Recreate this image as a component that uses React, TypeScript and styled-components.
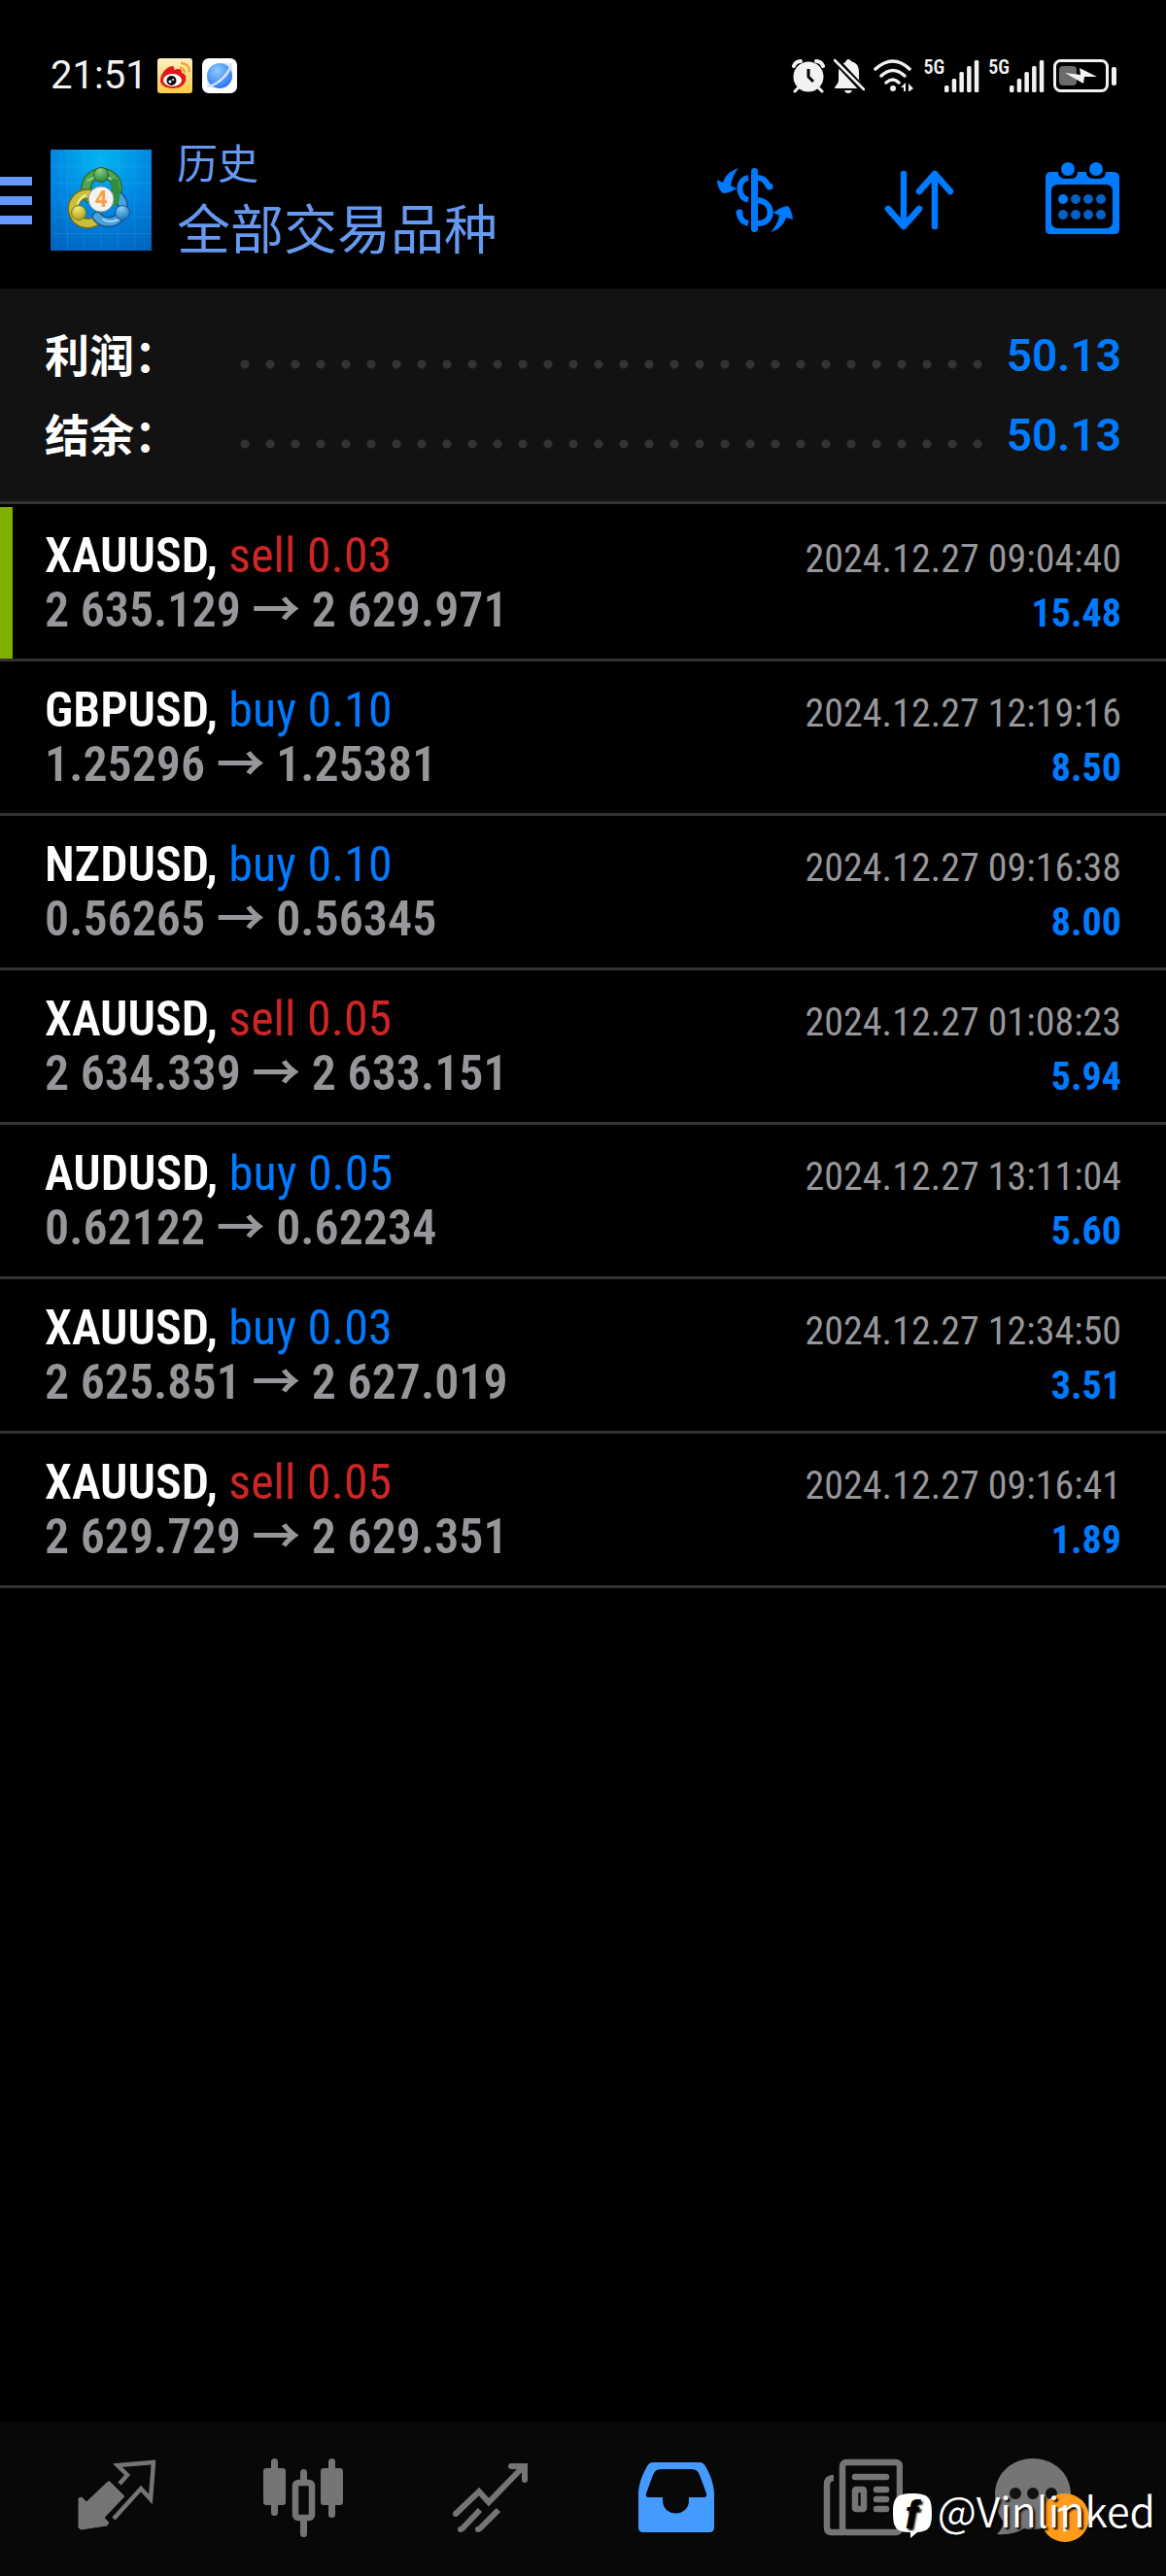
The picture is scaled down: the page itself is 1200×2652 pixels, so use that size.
import React from 'react';
import styled, { createGlobalStyle } from 'styled-components';

const BLUE = '#007aff';
const GREY = '#757575';
const CONDENSED = '"Roboto Condensed", "Noto Sans CJK SC", sans-serif';

const GlobalStyle = createGlobalStyle`
  * { box-sizing: border-box; }
  body { margin: 0; background: #000; }
  button { border: 0; padding: 0; background: none; cursor: pointer; }
  svg { display: block; }
`;

const Page = styled.div`
  position: relative;
  display: flex;
  flex-direction: column;
  min-height: 100vh;
  background: #000;
  color: #fff;
  font-family: Roboto, 'Noto Sans CJK SC', sans-serif;
`;

const StatusBar = styled.div`
  display: flex;
  align-items: center;
  justify-content: space-between;
  height: 115px;
  padding: 41px 50px 0 52px;
`;

const StatusGroup = styled.div<{ $gap: number }>`
  display: flex;
  align-items: center;
  gap: ${(p) => p.$gap}px;
`;

const Clock = styled.time`
  color: #f2f2f2;
  font-size: 40px;
  line-height: 44px;
`;

const Signal = styled.div`
  display: flex;
  align-items: flex-start;
`;

const Network = styled.span`
  color: #f2f2f2;
  font-family: ${CONDENSED};
  font-size: 20px;
  font-weight: 600;
  line-height: 16px;
`;

const Header = styled.header`
  display: flex;
  align-items: center;
  min-height: 182px;
  padding-right: 46px;
`;

const MenuButton = styled.button`
  display: flex;
  flex-direction: column;
  gap: 11px;
  width: 33px;
  margin-right: 19px;
`;

const MenuBar = styled.span`
  height: 9px;
  background: #6699ff;
`;

const Titles = styled.div`
  flex: 1;
  margin-left: 26px;
  padding-bottom: 4px;
  color: #6699f0;
  font-family: 'Noto Sans CJK SC', sans-serif;
`;

const Section = styled.h1`
  margin: 0;
  font-size: 42px;
  font-weight: 400;
  line-height: 56px;
`;

const Filter = styled.p`
  margin: 0;
  font-size: 55px;
  line-height: 76px;
`;

const Actions = styled.div`
  display: flex;
  gap: 88px;
`;

const Summary = styled.dl`
  margin: 0;
  padding: 28px 46px 27px;
  border-bottom: 3px solid #333;
  background: #121212;
`;

const SummaryLine = styled.div`
  display: flex;
  gap: 18px;
  font-size: 46px;
  line-height: 82px;
`;

const SummaryLabel = styled.dt`
  width: 175px;
  font-family: 'Noto Sans CJK SC', sans-serif;
  font-weight: 700;
  line-height: 76px;
`;

const Leader = styled.span`
  flex: 1;
  background: radial-gradient(circle, #333 4px, transparent 5px) 0 41px / 26px 18px repeat-x;
`;

const SummaryValue = styled.dd`
  margin: 0;
  color: ${BLUE};
  font-weight: 600;
`;

const Deals = styled.ul`
  margin: 0;
  padding: 3px 0 0;
  list-style: none;
`;

const Deal = styled.li<{ $marked: boolean }>`
  padding: 22px 46px;
  border-bottom: 3px solid #333;
  background: linear-gradient(${(p) => (p.$marked ? '#7fb000, #7fb000' : '#000, #000')}) left / 13px 100% no-repeat;
  font-family: ${CONDENSED};
`;

const DealLine = styled.div`
  display: flex;
  align-items: baseline;
  justify-content: space-between;
  height: 56px;
  font-size: 50px;
  line-height: 56px;
`;

const Symbol = styled.strong`
  font-weight: 600;
`;

const Side = styled.span<{ $side: 'buy' | 'sell' }>`
  color: ${(p) => (p.$side === 'buy' ? BLUE : '#d02525')};
`;

const Prices = styled.span`
  color: #97979b;
  font-weight: 600;
`;

const Arrow = styled.span`
  font-family: 'Noto Sans CJK SC', sans-serif;
  font-weight: 700;
  line-height: 0;
`;

const Stamp = styled.time`
  color: #97979b;
  font-size: 40px;
`;

const Profit = styled.span`
  color: ${BLUE};
  font-size: 40px;
  font-weight: 700;
`;

const TabBar = styled.nav`
  display: grid;
  grid-template-columns: repeat(6, 1fr);
  align-items: center;
  height: 159px;
  margin-top: auto;
  padding: 0 24px 4px;
  background: #080808;
`;

const Tab = styled.button`
  display: flex;
  justify-content: center;
`;

const Watermark = styled.div`
  position: absolute;
  right: 11px;
  bottom: 36px;
  display: flex;
  align-items: flex-end;
  gap: 5px;
  color: #fff;
  font-family: 'Noto Sans CJK SC', sans-serif;
  font-size: 43px;
  font-weight: 350;
  line-height: 66px;
  text-shadow: 2px 2px 2px #000;
`;

const WeiboIcon = () => (
  <svg width="36" height="36" viewBox="0 0 36 36" aria-hidden="true">
    <defs>
      <linearGradient id="weibo" x1="0" y1="0" x2="0" y2="1">
        <stop offset="0" stopColor="#fff0c4" />
        <stop offset="1" stopColor="#ffcb45" />
      </linearGradient>
    </defs>
    <rect width="36" height="36" rx="3" fill="url(#weibo)" />
    <path d="M3 23C3 16 9 9 15 8c2 0 3 2 2 4 5-2 9-1 8 3 4 1 5 4 4 8-1 5-7 8-13 8S3 28 3 23Z" fill="#e01a1a" />
    <ellipse cx="15.500" cy="22.500" rx="9.500" ry="6.500" fill="#fff" />
    <circle cx="14.500" cy="23" r="5" fill="#111" />
    <circle cx="13" cy="24" r="1.500" fill="#fff" />
    <circle cx="16" cy="22" r="1" fill="#fff" />
    <path d="M23 10c3 0 5 2 5 5M24 5c6 0 9 4 9 9" fill="none" stroke="#f6a22a" strokeWidth="2.500" />
  </svg>
);

const BrowserIcon = () => (
  <svg width="36" height="36" viewBox="0 0 36 36" aria-hidden="true">
    <defs>
      <radialGradient id="planet" cx="0.400" cy="0.300" r="0.800">
        <stop offset="0" stopColor="#8ccbff" />
        <stop offset="1" stopColor="#236bed" />
      </radialGradient>
    </defs>
    <rect width="36" height="36" rx="7" fill="#fff" />
    <path d="M5 30V21L22 5h9v9L15 30Z" fill="#d8e8ff" />
    <circle cx="18" cy="18" r="13" fill="url(#planet)" />
    <path d="M6 29c8-1 20-10 24-22" fill="none" stroke="#cfe4ff" strokeWidth="2.500" />
  </svg>
);

const AlarmIcon = () => (
  <svg width="34" height="36" viewBox="0 0 34 36" aria-hidden="true">
    <g fill="none" stroke="#f2f2f2" strokeLinecap="round">
      <path d="M2 8Q4 3 9 3M32 8Q30 3 25 3" strokeWidth="4" />
      <path d="M8 29l-5 5M26 29l5 5" strokeWidth="3" />
    </g>
    <circle cx="17" cy="19" r="15.500" fill="#f2f2f2" />
    <path d="M17 11v8l5 5" fill="none" stroke="#000" strokeWidth="3" />
  </svg>
);

const MutedIcon = () => (
  <svg width="32" height="36" viewBox="0 0 32 36" aria-hidden="true">
    <path d="M12 4Q13 1 15 1t3 2Q26 5 26 14v8l5 8v1H1c0-3 4-4 4-9v-8Q5 7 12 4Z" fill="#f2f2f2" />
    <path d="M11 33h8q-1 3-4 3t-4-3Z" fill="#f2f2f2" />
    <path d="M0 0L32 34" stroke="#000" strokeWidth="7" />
    <path d="M1 2L31 32" stroke="#f2f2f2" strokeWidth="2.500" strokeLinecap="round" />
  </svg>
);

const WifiIcon = () => (
  <svg width="42" height="34" viewBox="0 0 42 34" aria-hidden="true">
    <g fill="none" stroke="#f2f2f2" strokeWidth="3.500" strokeLinecap="round">
      <path d="M2 10Q20-6 37 10M8 17Q20 6 32 17M13 24Q20 18 26 24" />
    </g>
    <circle cx="20" cy="30" r="3" fill="#f2f2f2" />
    <path d="M33 24v9h-2v-4h-3ZM36 25l5 5-4 3h-1Z" fill="#f2f2f2" />
  </svg>
);

const SignalBars = () => (
  <svg width="36" height="34" viewBox="0 0 36 34" aria-hidden="true">
    {[7, 14, 21, 27, 33].map((h, i) => (
      <rect key={h} x={i * 7.7} y={34 - h} width="4.500" height={h} rx="1.500" fill="#f2f2f2" />
    ))}
  </svg>
);

const BatteryIcon = () => (
  <svg width="66" height="34" viewBox="0 0 66 34" aria-hidden="true">
    <rect x="1.500" y="1.500" width="54" height="31" rx="6" fill="none" stroke="#f2f2f2" strokeWidth="3" />
    <rect x="6" y="7" width="18" height="20" rx="4" fill="#6b6b6b" />
    <path d="M12 14l16 2-1-7 18 9-13 0-1 7Z" fill="#f2f2f2" />
    <rect x="60" y="8" width="5" height="19" rx="2" fill="#f2f2f2" />
  </svg>
);

const AppLogo = () => (
  <svg width="104" height="104" viewBox="0 0 104 104" role="img" aria-label="MetaTrader 4">
    <defs>
      <radialGradient id="sky" cx="0.500" cy="0.100" r="1">
        <stop offset="0" stopColor="#03b6ee" />
        <stop offset="0.500" stopColor="#0086e2" />
        <stop offset="1" stopColor="#0064bd" />
      </radialGradient>
      <radialGradient id="green" cx="0.400" cy="0.200" r="0.900">
        <stop offset="0" stopColor="#8fd382" />
        <stop offset="1" stopColor="#1c7a2c" />
      </radialGradient>
      <radialGradient id="yellow" cx="0.400" cy="0.200" r="0.900">
        <stop offset="0" stopColor="#f2ea72" />
        <stop offset="1" stopColor="#a79a15" />
      </radialGradient>
      <radialGradient id="blue" cx="0.400" cy="0.200" r="0.900">
        <stop offset="0" stopColor="#8ad0f5" />
        <stop offset="1" stopColor="#0f6bb5" />
      </radialGradient>
    </defs>
    <rect width="104" height="104" fill="url(#sky)" />
    <path d="M17.500 0v104M34.500 0v104M52 0v104M69.500 0v104M86.500 0v104M0 17.500h104M0 34.500h104M0 52h104M0 69.500h104M0 86.500h104" stroke="#5fc0ff" strokeOpacity="0.150" />
    <g fill="none" strokeLinecap="round">
      <path d="M40 50A16 16 0 1 1 66 49" stroke="#2b6b35" strokeWidth="11" />
      <path d="M40 50A16 16 0 1 1 66 49" stroke="#4fa552" strokeWidth="8" />
      <path d="M38 32Q50 24 62 30" stroke="#a8dc9d" strokeWidth="1.500" />
      <path d="M40 46A15 15 0 1 0 50 70" stroke="#6f6a1c" strokeWidth="11" />
      <path d="M40 46A15 15 0 1 0 50 70" stroke="#cabf3a" strokeWidth="8" />
      <path d="M28 56Q30 50 36 47" stroke="#f5f0a0" strokeWidth="2" />
      <path d="M66 46A15 15 0 1 1 48 69" stroke="#14548c" strokeWidth="11" />
      <path d="M66 46A15 15 0 1 1 48 69" stroke="#4aa2dd" strokeWidth="8" />
      <path d="M54 72Q62 76 70 72" stroke="#b5e0fa" strokeWidth="1.500" />
      <path d="M66 34Q69 44 66 54" stroke="#2f8e3d" strokeWidth="8" />
    </g>
    <circle cx="52" cy="26" r="7.500" fill="url(#green)" stroke="#255f2e" />
    <circle cx="29" cy="65" r="7.500" fill="url(#yellow)" stroke="#7b7419" />
    <circle cx="74" cy="65" r="7.500" fill="url(#blue)" stroke="#15568d" />
    <circle cx="52" cy="51" r="13" fill="#f3f3f3" stroke="#8c9a8c" />
    <text x="52" y="59" textAnchor="middle" fontFamily="Roboto, sans-serif" fontSize="23" fontWeight="700" fill="#f7a145">4</text>
  </svg>
);

const CurrencyIcon = () => (
  <svg width="80" height="80" viewBox="0 0 80 80" aria-hidden="true">
    <rect x="35" y="7" width="7" height="66" rx="3.500" fill={BLUE} />
    <g fill="none" stroke={BLUE} strokeWidth="6">
      <path d="M32 17C21 19 20 36 32 40M23 54Q24 62 32 64" />
      <path d="M42 17Q49 17 53 26M42 40C59 42 59 64 42 64" />
    </g>
    <circle cx="23" cy="53" r="3.500" fill={BLUE} />
    <circle cx="54" cy="26" r="3.500" fill={BLUE} />
    <path d="M22 7C13 10 8 15 6 22L0 19Q0 28 6 33Q13 33 20 28L14 25Q16 14 22 7Z" fill={BLUE} />
    <path d="M55 73C64 70 69 65 71 58L78 60Q77 51 73 46Q65 47 58 53L64 56Q62 66 55 73Z" fill={BLUE} />
  </svg>
);

const SortIcon = () => (
  <svg width="80" height="80" viewBox="0 0 80 80" fill="none" stroke={BLUE} strokeWidth="6.500" strokeLinecap="round" strokeLinejoin="round" aria-hidden="true">
    <path d="M24 13v54M8 49l16 18 16-18" />
    <path d="M56 67V13M40 31l16-18 16 18" />
  </svg>
);

const CalendarIcon = () => (
  <svg width="80" height="80" viewBox="0 0 80 80" aria-hidden="true">
    <path fillRule="evenodd" d="M7 11H15q0 7 8 7h5q7 0 7-7h9q0 7 8 7h5q7 0 7-7h8q6 0 6 6v53q0 5-5 5H7q-5 0-5-5V17q0-6 5-6ZM15 24q-7 0-7 7v31q0 7 7 7h49q7 0 7-7V31q0-7-7-7Z" fill={BLUE} />
    <circle cx="25" cy="8" r="7" fill={BLUE} />
    <circle cx="54" cy="8" r="7" fill={BLUE} />
    {[39, 55].map((y) =>
      [20, 33, 46, 59].map((x) => (
        <circle key={`${x}-${y}`} cx={x} cy={y} r="5" fill={x === 20 && y === 39 ? BLUE : '#0560c6'} />
      )),
    )}
  </svg>
);

const QuotesIcon = () => (
  <svg width="80" height="80" viewBox="0 0 80 80" aria-hidden="true">
    <path d="M33 24L48 39L27 61L32 66L30 69L3 73L1 71V41L4 40L9 45L31 24Z" fill={GREY} stroke={GREY} strokeLinejoin="round" />
    <path d="M43 26l8-9-10-10 37-3-3 38-10-11-28 31" fill="none" stroke={GREY} strokeWidth="4.500" />
  </svg>
);

const ChartIcon = () => (
  <svg width="82" height="82" viewBox="0 0 82 82" aria-hidden="true">
    <g fill={GREY}>
      <rect x="8" y="1" width="7" height="59" rx="3.500" />
      <rect x="0" y="11" width="23" height="38" rx="3" />
      <rect x="67" y="1" width="7" height="61" rx="3.500" />
      <rect x="59" y="11" width="23" height="38" rx="3" />
      <rect x="38" y="12" width="7" height="16" rx="3.500" />
      <rect x="38" y="60" width="7" height="22" rx="3.500" />
    </g>
    <rect x="33" y="26" width="17" height="36" rx="3" fill="none" stroke={GREY} strokeWidth="6.500" />
  </svg>
);

const TrendIcon = () => (
  <svg width="80" height="80" viewBox="0 0 80 80" fill="none" stroke={GREY} strokeWidth="6" aria-hidden="true">
    <path d="M5 57L29 34L39 45L75 8" />
    <path d="M62 8h14v14" strokeLinecap="round" />
    <path d="M11 73L30 53M29 73L49 53" />
    <g fill={GREY} stroke="none">
      <circle cx="5" cy="57" r="3" />
      <circle cx="10" cy="73" r="3" />
      <circle cx="28" cy="73" r="3" />
    </g>
  </svg>
);

const HistoryIcon = () => (
  <svg width="80" height="74" viewBox="0 0 80 74" aria-hidden="true">
    <path fillRule="evenodd" d="M16 1H64q4 0 6 4C76 15 79 26 79 34V68q0 5-5 5H6q-5 0-5-5V34C1 26 4 15 10 5Q12 1 16 1ZM24 8q-6 0-8 6L9 33q-1 4 3 4H26v3c0 18 27 18 27 0V37H68q4 0 3-4L64 14q-2-6-8-6Z" fill="#439bff" />
  </svg>
);

const NewsIcon = () => (
  <svg width="82" height="80" viewBox="0 0 82 80" fill="none" stroke={GREY} aria-hidden="true">
    <rect x="20" y="4" width="59" height="72" rx="4" strokeWidth="6.500" />
    <path d="M11 20Q4 20 4 27V71Q4 76 9 76H22" strokeWidth="6.500" />
    <path d="M33 19h32M55 32h10M55 42h10M55 52h10" strokeWidth="6.500" strokeLinecap="round" />
    <rect x="33" y="32" width="9" height="20" rx="1" strokeWidth="6.500" />
  </svg>
);

const ChatIcon = () => (
  <svg width="116" height="92" viewBox="0 0 116 92" aria-hidden="true">
    <path d="M41 6C63 6 80 22 80 43S63 79 41 79q-5 0-9-1Q22 85 4 84C8 80 11 76 10 70Q2 60 2 43C2 22 19 6 41 6Z" fill={GREY} />
    <g fill="#111">
      <circle cx="23" cy="42" r="6" />
      <circle cx="41" cy="42" r="6" />
      <circle cx="60" cy="42" r="6" />
    </g>
    <circle cx="74" cy="67" r="25" fill="#ff9c1a" />
    <text x="73" y="81" textAnchor="middle" fontFamily="Roboto, sans-serif" fontSize="36" fill="#fff">1</text>
  </svg>
);

const BrandIcon = () => (
  <svg width="42" height="50" viewBox="0 0 42 50" aria-hidden="true">
    <path d="M21 1C37 1 41 5 41 21c0 15-3 19-15 20l-7 6v-6C5 41 1 37 1 21 1 5 5 1 21 1Z" fill="#fff" />
    <text x="20" y="37" textAnchor="middle" fontFamily="'Liberation Sans', sans-serif" fontSize="40" fontStyle="italic" fontWeight="700" fill="#000">f</text>
  </svg>
);

type DealData = {
  symbol: string;
  side: 'buy' | 'sell';
  volume: string;
  open: string;
  close: string;
  time: string;
  profit: string;
};

const deals: DealData[] = [
  { symbol: 'XAUUSD', side: 'sell', volume: '0.03', open: '2 635.129', close: '2 629.971', time: '2024.12.27 09:04:40', profit: '15.48' },
  { symbol: 'GBPUSD', side: 'buy', volume: '0.10', open: '1.25296', close: '1.25381', time: '2024.12.27 12:19:16', profit: '8.50' },
  { symbol: 'NZDUSD', side: 'buy', volume: '0.10', open: '0.56265', close: '0.56345', time: '2024.12.27 09:16:38', profit: '8.00' },
  { symbol: 'XAUUSD', side: 'sell', volume: '0.05', open: '2 634.339', close: '2 633.151', time: '2024.12.27 01:08:23', profit: '5.94' },
  { symbol: 'AUDUSD', side: 'buy', volume: '0.05', open: '0.62122', close: '0.62234', time: '2024.12.27 13:11:04', profit: '5.60' },
  { symbol: 'XAUUSD', side: 'buy', volume: '0.03', open: '2 625.851', close: '2 627.019', time: '2024.12.27 12:34:50', profit: '3.51' },
  { symbol: 'XAUUSD', side: 'sell', volume: '0.05', open: '2 629.729', close: '2 629.351', time: '2024.12.27 09:16:41', profit: '1.89' },
];

const totals = [
  { label: '利润：', value: '50.13' },
  { label: '结余：', value: '50.13' },
];

const tabs = [
  { name: 'Quotes', Icon: QuotesIcon },
  { name: 'Charts', Icon: ChartIcon },
  { name: 'Trade', Icon: TrendIcon },
  { name: 'History', Icon: HistoryIcon },
  { name: 'News', Icon: NewsIcon },
  { name: 'Messages', Icon: ChatIcon },
];

export default function App() {
  return (
    <Page>
      <GlobalStyle />
      <StatusBar>
        <StatusGroup $gap={10}>
          <Clock>21:51</Clock>
          <WeiboIcon />
          <BrowserIcon />
        </StatusGroup>
        <StatusGroup $gap={9}>
          <AlarmIcon />
          <MutedIcon />
          <WifiIcon />
          <Signal>
            <Network>5G</Network>
            <SignalBars />
          </Signal>
          <Signal>
            <Network>5G</Network>
            <SignalBars />
          </Signal>
          <BatteryIcon />
        </StatusGroup>
      </StatusBar>

      <Header>
        <MenuButton aria-label="Menu">
          <MenuBar />
          <MenuBar />
          <MenuBar />
        </MenuButton>
        <AppLogo />
        <Titles>
          <Section>历史</Section>
          <Filter>全部交易品种</Filter>
        </Titles>
        <Actions>
          <button aria-label="Currency"><CurrencyIcon /></button>
          <button aria-label="Sort"><SortIcon /></button>
          <button aria-label="Period"><CalendarIcon /></button>
        </Actions>
      </Header>

      <Summary>
        {totals.map((t) => (
          <SummaryLine key={t.label}>
            <SummaryLabel>{t.label}</SummaryLabel>
            <Leader />
            <SummaryValue>{t.value}</SummaryValue>
          </SummaryLine>
        ))}
      </Summary>

      <Deals>
        {deals.map((d, i) => (
          <Deal key={d.time} $marked={i === 0}>
            <DealLine>
              <span>
                <Symbol>{d.symbol},</Symbol> <Side $side={d.side}>{d.side} {d.volume}</Side>
              </span>
              <Stamp>{d.time}</Stamp>
            </DealLine>
            <DealLine>
              <Prices>
                {d.open} <Arrow>→</Arrow> {d.close}
              </Prices>
              <Profit>{d.profit}</Profit>
            </DealLine>
          </Deal>
        ))}
      </Deals>

      <TabBar>
        {tabs.map(({ name, Icon }) => (
          <Tab key={name} aria-label={name}>
            <Icon />
          </Tab>
        ))}
      </TabBar>

      <Watermark>
        <BrandIcon />
        <span>@Vinlinked</span>
      </Watermark>
    </Page>
  );
}
